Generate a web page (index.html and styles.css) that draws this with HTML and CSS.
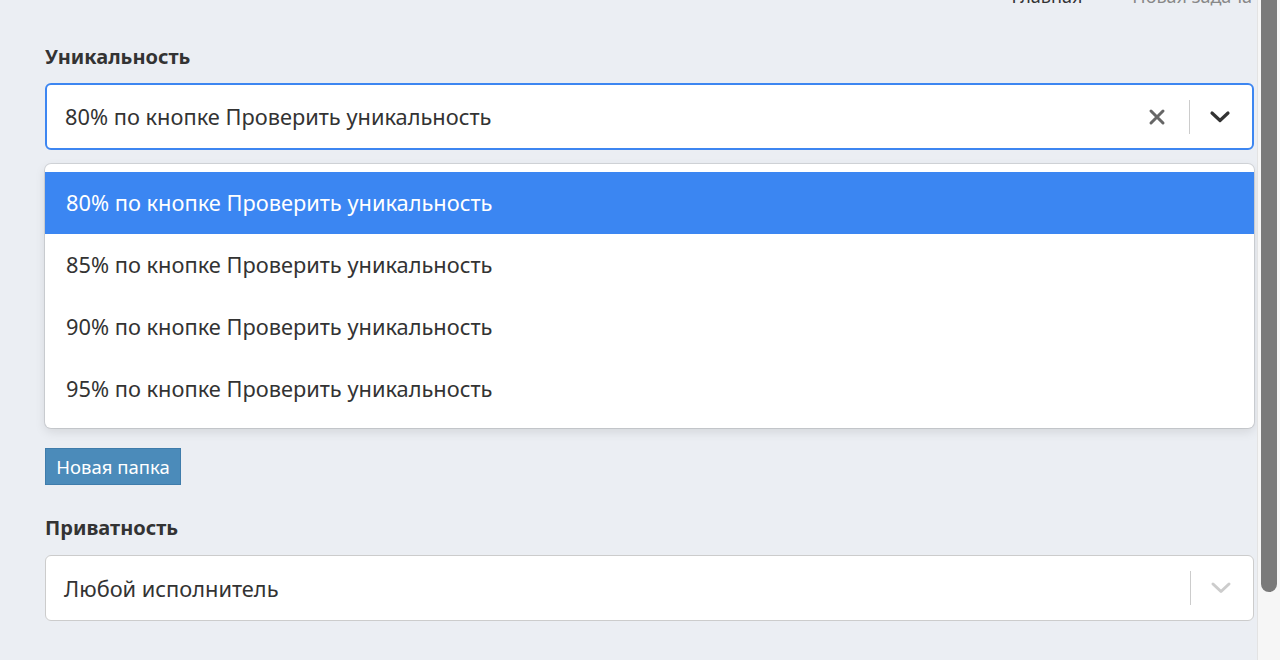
FILE: index.html
```html
<!DOCTYPE html>
<html lang="ru">
<head>
    <meta charset="UTF-8">
    <meta name="viewport" content="width=device-width, initial-scale=1.0">
    <title>Новая задача</title>
    <link rel="stylesheet" href="styles.css">
</head>
<body>
    <div class="page">
        <div class="breadcrumbs">
            <span class="crumb">Главная</span>
            <span class="crumb-sep">—</span>
            <span class="crumb current">Новая задача</span>
        </div>

        <div class="form-group">
            <label class="label">Уникальность</label>
            <div class="select focused">
                <div class="select-value">80% по кнопке Проверить уникальность</div>
                <div class="select-icons">
                    <span class="icon-clear">
                        <svg width="18" height="18" viewBox="0 0 18 18"><path d="M3 3 L15 15 M15 3 L3 15" stroke="#666" stroke-width="3" stroke-linecap="round"/></svg>
                    </span>
                    <span class="select-divider"></span>
                    <span class="icon-arrow">
                        <svg width="22" height="14" viewBox="0 0 22 14"><path d="M3 3 L11 10.5 L19 3" fill="none" stroke="#333" stroke-width="3.2" stroke-linecap="round" stroke-linejoin="round"/></svg>
                    </span>
                </div>
            </div>
            <div class="menu">
                <div class="option selected">80% по кнопке Проверить уникальность</div>
                <div class="option">85% по кнопке Проверить уникальность</div>
                <div class="option">90% по кнопке Проверить уникальность</div>
                <div class="option">95% по кнопке Проверить уникальность</div>
            </div>
            <button class="btn-small">Новая папка</button>
        </div>

        <div class="form-group">
            <label class="label">Приватность</label>
            <div class="select">
                <div class="select-value">Любой исполнитель</div>
                <div class="select-icons">
                    <span class="select-divider"></span>
                    <span class="icon-arrow">
                        <svg width="22" height="14" viewBox="0 0 22 14"><path d="M3 3 L11 10.5 L19 3" fill="none" stroke="#ccc" stroke-width="3" stroke-linecap="round" stroke-linejoin="round"/></svg>
                    </span>
                </div>
            </div>
        </div>
    </div>

    <div class="scrollbar">
        <div class="scroll-thumb"></div>
    </div>
</body>
</html>
```

FILE: styles.css
```css
html, body {
    height: 100%;
}
body {
    font-family: 'Noto Sans', 'Open Sans', Arial, sans-serif;
    margin: 0;
    background-color: #ebeef3;
    color: #333;
    display: flex;
    overflow: hidden;
}
.page {
    flex: 1;
    padding: 0 3px 0 45px;
}
.breadcrumbs {
    display: flex;
    justify-content: flex-end;
    gap: 16px;
    font-size: 18px;
    line-height: 20px;
    margin-top: -14px;
    padding-right: 2px;
    color: #333;
}
.crumb-sep {
    color: #999;
}
.crumb.current {
    color: #888;
}
.form-group {
    margin-top: 39px;
}
.label {
    display: block;
    font-size: 20px;
    font-weight: bold;
    line-height: 24px;
    margin-bottom: 14px;
}
.select {
    display: flex;
    align-items: center;
    height: 66px;
    background: white;
    border: 1px solid #ccc;
    border-radius: 6px;
    box-sizing: border-box;
}
.select.focused {
    height: 67px;
    border: 2px solid #3d86f1;
}
.select-value {
    flex: 1;
    padding-left: 18px;
    font-size: 21.8px;
}
.select-icons {
    display: flex;
    align-items: center;
}
.icon-clear {
    display: flex;
    padding: 0 23px 0 14px;
}
.select-divider {
    width: 1px;
    height: 34px;
    background: #ccc;
}
.icon-arrow {
    display: flex;
    padding: 0 21px 0 19px;
}
.menu {
    margin-top: 14px;
    background: white;
    border-radius: 6px;
    padding: 8px 0;
    box-shadow: 0 0 0 1px rgba(0,0,0,0.1), 0 4px 11px rgba(0,0,0,0.1);
}
.option {
    height: 62px;
    line-height: 62px;
    padding-left: 21px;
    font-size: 21.8px;
}
.option.selected {
    background-color: #3b86f2;
    color: white;
}
.btn-small {
    display: block;
    margin-top: 20px;
    height: 37px;
    width: 136px;
    background-color: #4b8bba;
    border: 1px solid #3f7cab;
    color: white;
    font-family: inherit;
    font-size: 18.5px;
    padding: 0;
    cursor: pointer;
}
.form-group + .form-group {
    margin-top: 31px;
}
.form-group + .form-group .label {
    margin-bottom: 15px;
}
.scrollbar {
    width: 23px;
    background: #f6f6f6;
    border-left: 1px solid #e3e3e3;
    padding: 0 3px;
    box-sizing: border-box;
}
.scroll-thumb {
    height: 600px;
    margin-top: -8px;
    background: #7a7a7a;
    border-radius: 9px;
}
```
